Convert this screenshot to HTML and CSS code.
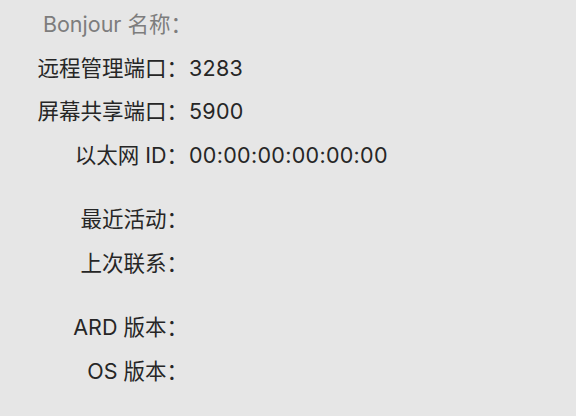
FILE: index.html
```html
<!DOCTYPE html>
<html lang="zh-CN">
<head>
    <meta charset="UTF-8">
    <meta name="viewport" content="width=device-width, initial-scale=1.0">
    <title>电脑信息</title>
    <link rel="stylesheet" href="styles.css">
</head>
<body>

<!-- 电脑信息列表 -->
<div class="info-list">
    <div class="info-label muted bonjour">Bonjour 名称：</div>
    <div class="info-value"></div>

    <div class="info-label">远程管理端口：</div>
    <div class="info-value">3283</div>

    <div class="info-label">屏幕共享端口：</div>
    <div class="info-value">5900</div>

    <div class="info-label">以太网 ID：</div>
    <div class="info-value">00:00:00:00:00:00</div>

    <div class="info-label group-start">最近活动：</div>
    <div class="info-value group-start"></div>

    <div class="info-label">上次联系：</div>
    <div class="info-value"></div>

    <div class="info-label group-start">ARD 版本：</div>
    <div class="info-value group-start"></div>

    <div class="info-label">OS 版本：</div>
    <div class="info-value"></div>
</div>

</body>
</html>
```

FILE: styles.css
```css
/* Genel */
body {
    margin: 0;
    padding: 0;
    background-color: #e6e6e6;
    font-family: "Inter", "Noto Sans CJK SC", sans-serif;
    color: #262626;
}

/* Bilgi listesi */
.info-list {
    display: grid;
    grid-template-columns: 188px 1fr;
    column-gap: 1px;
    row-gap: 15.5px;
    padding-top: 10px;
}

.info-label {
    text-align: right;
    font-size: 21.5px;
    line-height: 28px;
    white-space: nowrap;
}

.info-value {
    font-size: 21.5px;
    line-height: 28px;
    letter-spacing: 0.3px;
    white-space: nowrap;
}

.muted {
    color: #7d7d7d;
}

/* Bonjour satırı biraz sağa kayık */
.bonjour {
    margin-right: -4px;
}

.group-start {
    margin-top: 21px;
}
```
